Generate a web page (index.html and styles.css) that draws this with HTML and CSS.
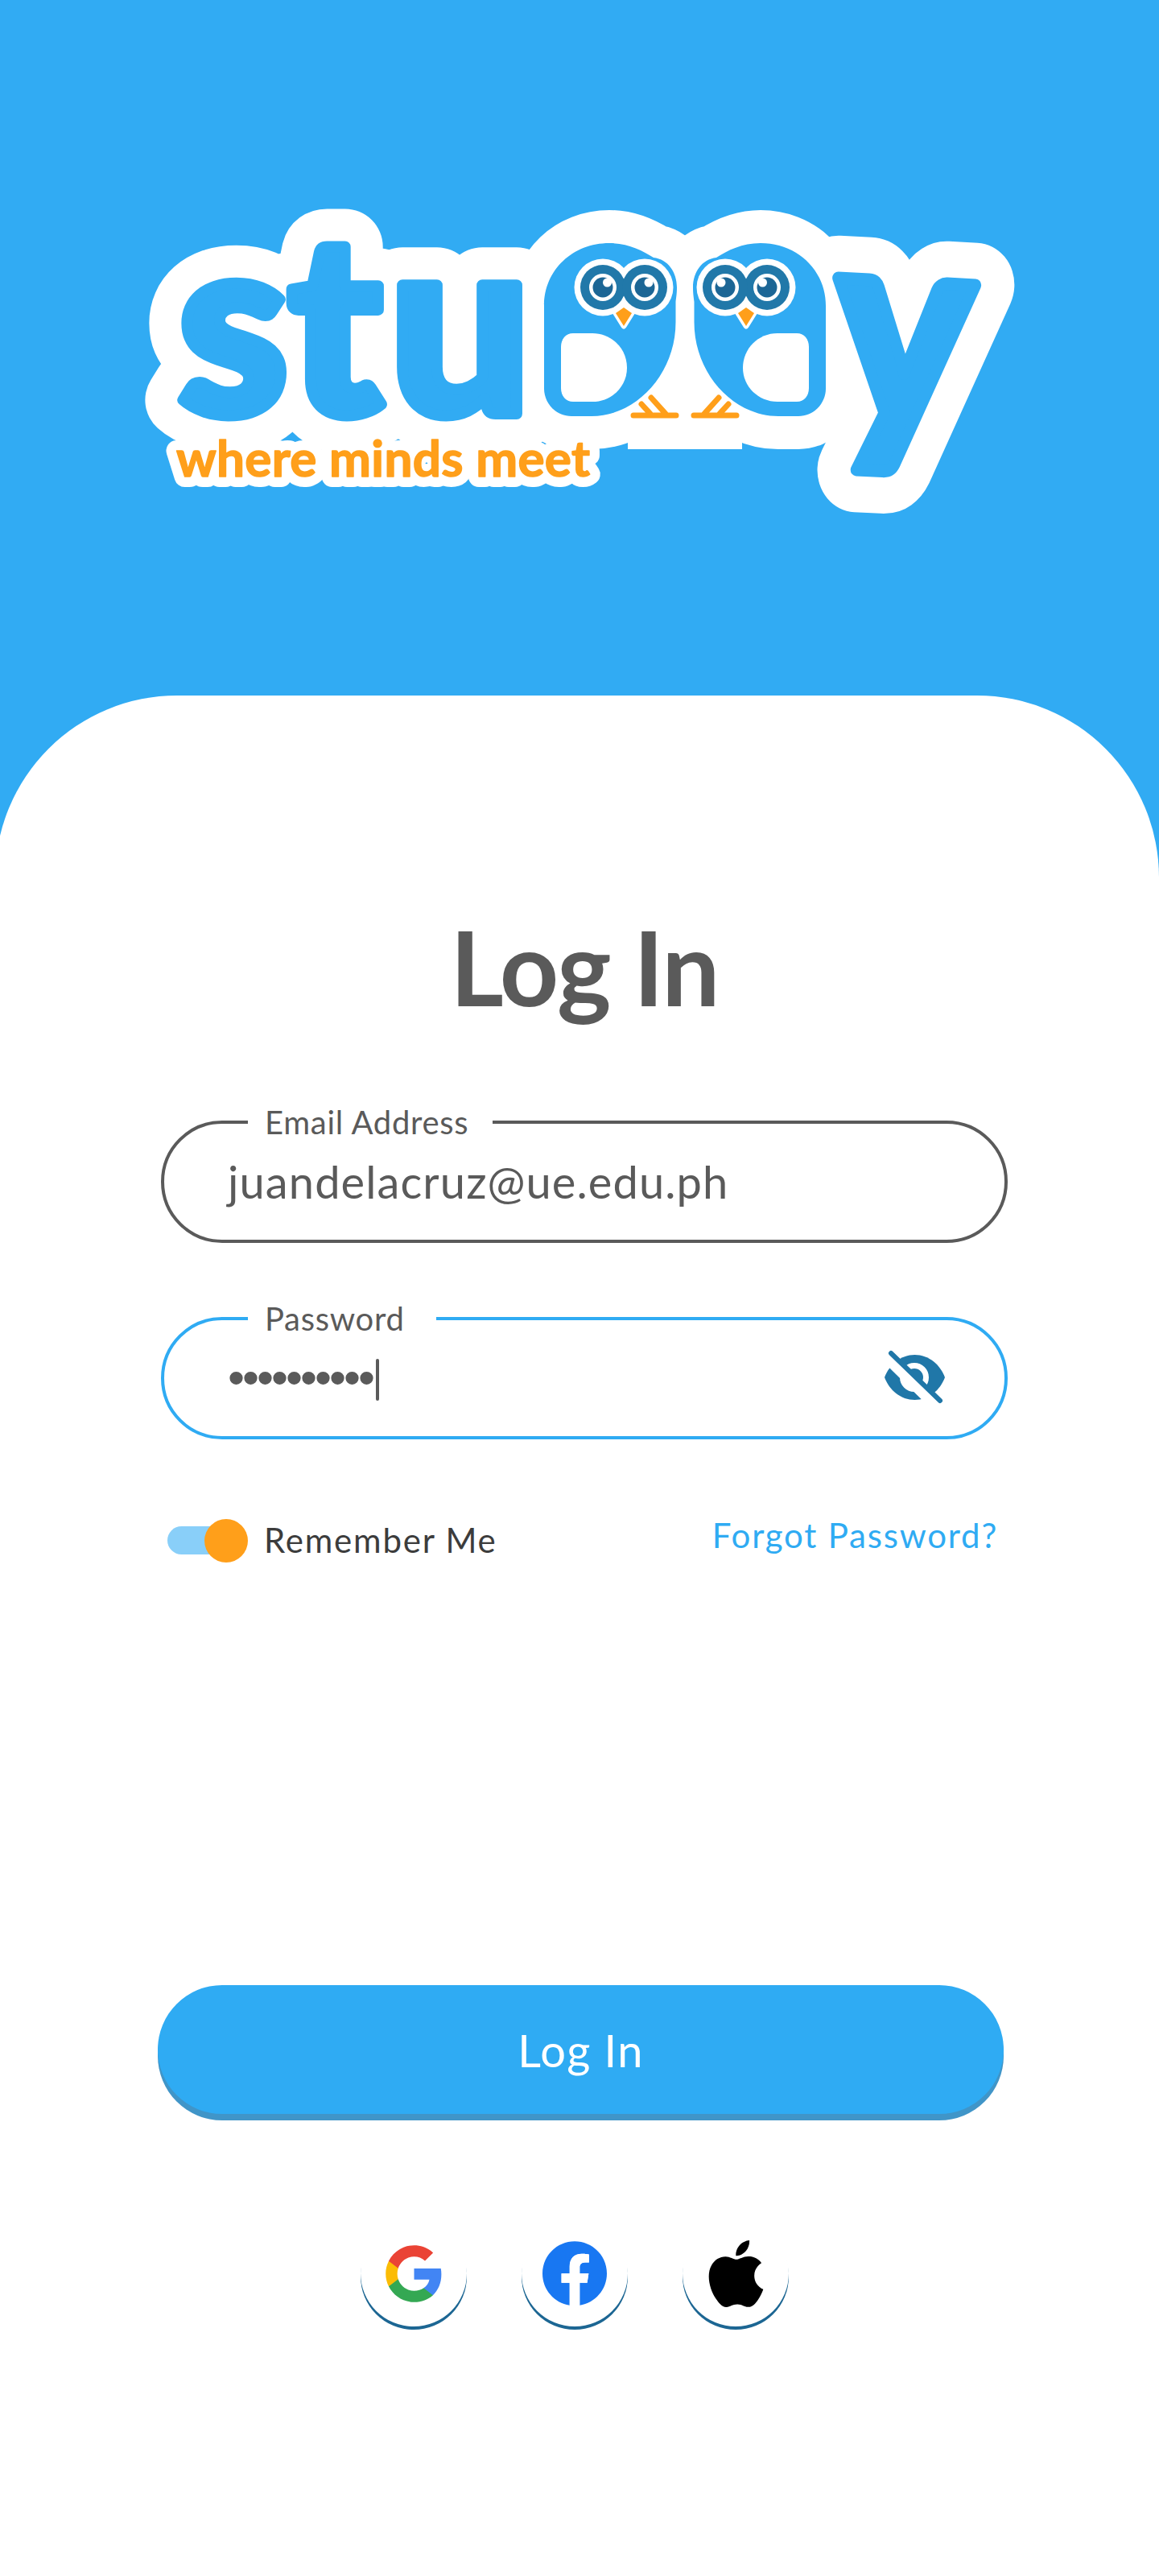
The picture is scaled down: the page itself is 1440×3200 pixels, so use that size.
FILE: index.html
```html
<!DOCTYPE html>
<html lang="en">
<head>
  <meta charset="UTF-8">
  <title>Studdy - Log In</title>
  <link rel="stylesheet" href="styles.css">
</head>
<body>
  <div class="page">
    <header class="hero">
      <svg class="logo" viewBox="0 0 1440 864" role="img" aria-label="Studdy, where minds meet">
        <defs>
          <g id="word">
            <text class="logo-letters" x="221 358 484" y="514" >stu</text>
            <text class="logo-letters" transform="translate(1032 524) rotate(3) scale(1.03 1.12)">y</text>
          </g>
          <path id="body" d="M676 380C676 335 712 302 757 302C780 302 798 311 812 320C830 322 841 338 841 357C841 365 840 370 839.500 375V400C839.500 465 790 517 735 517H710C690 517 676 500 676 483Z"/>
          <text id="tagline" class="tagline" x="219" y="592" textLength="514">where minds meet</text>
          <g id="bird">
            <path class="belly" d="M712 414H736C760 414 779 433 779 457C779 480 760 499 736 499H712C703 499 697 492 697 482V431C697 421 703 414 712 414Z"/>
            <circle class="eye-white" cx="749" cy="357" r="35.500"/>
            <circle class="eye-white" cx="801" cy="357" r="35.500"/>
            <path class="beak" d="M775 382L785 389L775 405L765 389Z"/>
            <circle class="eye-ring" cx="749" cy="357" r="28"/>
            <circle class="eye-ring" cx="801" cy="357" r="28"/>
            <circle class="eye-white" cx="749" cy="357" r="17"/>
            <circle class="eye-white" cx="801" cy="357" r="17"/>
            <circle class="pupil" cx="749" cy="357" r="12.500"/>
            <circle class="pupil" cx="801" cy="357" r="12.500"/>
            <circle class="eye-white" cx="754.500" cy="351" r="5.500"/>
            <circle class="eye-white" cx="806" cy="351" r="5.500"/>
            <path class="feet" d="M787 516H840M827 514L809 494M808 514L797 502"/>
          </g>
        </defs>

        <use href="#word" class="halo-word"/>
        <use href="#body" class="halo-body"/>
        <use href="#body" class="halo-body" transform="matrix(-1 0 0 1 1702 0)"/>
        <rect class="belly" x="780" y="470" width="142" height="88"/>

        <use href="#word" class="fill-word"/>
        <use href="#body" class="fill-body"/>
        <use href="#body" class="fill-body" transform="matrix(-1 0 0 1 1702 0)"/>
        <use href="#bird"/>
        <use href="#bird" transform="matrix(-1 0 0 1 1702 0)"/>

        <use href="#tagline" class="halo-tagline"/>
        <use href="#tagline" class="fill-tagline"/>
      </svg>
    </header>

    <main class="card">
      <div class="form">
        <h1 class="title">Log In</h1>

        <fieldset class="field">
          <legend class="field-label label-email">Email Address</legend>
          <div class="field-value email-value">juandelacruz@ue.edu.ph</div>
        </fieldset>

        <fieldset class="field field-active">
          <legend class="field-label label-password">Password</legend>
          <div class="field-value">
            <span class="dots">••••••••••</span>
            <span class="caret"></span>
            <svg class="eye-icon" viewBox="0 0 80 68">
              <path fill="#2077a8" d="M2 34C8 18 22 6 39.500 6C57 6 71 18 77 34C71 50 57 62 39.500 62C22 62 8 50 2 34Z"/>
              <circle cx="39" cy="34" r="14.500" fill="#2077a8" stroke="#fff" stroke-width="7"/>
              <path stroke="#fff" stroke-width="13" d="M0 5L68 72"/>
              <path stroke="#2077a8" stroke-width="6" stroke-linecap="round" d="M10 4L71 63"/>
            </svg>
          </div>
        </fieldset>

        <div class="options">
          <label class="remember">
            <span class="toggle"><span class="toggle-knob"></span></span>
            Remember Me
          </label>
          <a class="forgot" href="#">Forgot Password?</a>
        </div>

        <button class="login-btn" type="button">Log In</button>

        <div class="socials">
          <a class="social" href="#" aria-label="Google">
            <svg width="77" height="77" viewBox="0 0 24 24">
              <path fill="#4285F4" d="M22.560 12.250c0-.78-.07-1.530-.2-2.250H12v4.260h5.920c-.26 1.370-1.040 2.530-2.210 3.310v2.770h3.570c2.080-1.920 3.280-4.740 3.280-8.090z"/>
              <path fill="#34A853" d="M12 23c2.970 0 5.460-.98 7.280-2.660l-3.570-2.770c-.98.66-2.230 1.060-3.710 1.060-2.860 0-5.290-1.930-6.160-4.530H2.180v2.840C3.990 20.530 7.700 23 12 23z"/>
              <path fill="#FBBC05" d="M5.840 14.090c-.22-.66-.35-1.360-.35-2.090s.13-1.430.35-2.090V7.070H2.180C1.430 8.550 1 10.220 1 12s.43 3.450 1.180 4.930l2.850-2.220.81-.62z"/>
              <path fill="#EA4335" d="M12 5.380c1.620 0 3.060.56 4.210 1.640l3.150-3.150C17.450 2.090 14.970 1 12 1 7.700 1 3.990 3.470 2.180 7.070l3.660 2.840c.87-2.600 3.300-4.530 6.160-4.530z"/>
            </svg>
          </a>
          <a class="social" href="#" aria-label="Facebook">
            <svg width="80" height="80" viewBox="0 0 24 24">
              <path fill="#1877f2" d="M24 12.073c0-6.627-5.373-12-12-12s-12 5.373-12 12c0 5.990 4.388 10.954 10.125 11.854v-8.385H7.078v-3.470h3.047V9.430c0-3.007 1.792-4.669 4.533-4.669 1.312 0 2.686.235 2.686.235v2.953H15.830c-1.491 0-1.956.925-1.956 1.874v2.250h3.328l-.532 3.470h-2.796v8.385C19.612 23.027 24 18.062 24 12.073z"/>
              <path fill="#fff" d="M16.671 15.542l.532-3.470h-3.328v-2.250c0-.949.465-1.874 1.956-1.874h1.513V4.995s-1.374-.235-2.686-.235c-2.741 0-4.533 1.662-4.533 4.669v2.643H7.078v3.470h3.047v8.385a12 12 0 0 0 3.750 0v-8.385z"/>
            </svg>
          </a>
          <a class="social" href="#" aria-label="Apple">
            <svg width="83" height="83" viewBox="0 0 24 24">
              <path fill="#000" d="M12.152 6.896c-.948 0-2.415-1.078-3.960-1.040-2.040.027-3.910 1.183-4.961 3.014-2.117 3.675-.546 9.103 1.519 12.090 1.013 1.454 2.208 3.090 3.792 3.039 1.520-.065 2.090-.987 3.935-.987 1.831 0 2.350.987 3.960.948 1.637-.026 2.676-1.480 3.676-2.948 1.156-1.688 1.636-3.325 1.662-3.415-.039-.013-3.182-1.221-3.220-4.857-.026-3.040 2.480-4.494 2.597-4.559-1.429-2.090-3.623-2.324-4.390-2.376-2-.156-3.675 1.090-4.610 1.090zM15.530 3.830c.843-1.012 1.400-2.427 1.245-3.830-1.207.052-2.662.805-3.532 1.818-.78.896-1.454 2.338-1.273 3.714 1.338.104 2.715-.688 3.559-1.701"/>
            </svg>
          </a>
        </div>
      </div>
    </main>
  </div>
</body>
</html>
```

FILE: styles.css
```css
* {
  box-sizing: border-box;
}

body {
  margin: 0;
  font-family: Lato, "Open Sans", sans-serif;
  color: #5a5a5a;
  overflow-x: hidden;
}

.page {
  background-color: #31abf3;
  height: 3200px;
  overflow: hidden;
}

/* logo */

.hero {
  height: 864px;
}

.logo {
  display: block;
  width: 1440px;
  height: 864px;
}

.logo-letters {
  font-family: Lato, sans-serif;
  font-weight: 900;
  font-size: 310px;
}

.halo-word {
  fill: #fff;
  stroke: #fff;
  stroke-width: 94px;
  stroke-linejoin: round;
}

.fill-word {
  fill: #31abf3;
  stroke: #31abf3;
  stroke-width: 14px;
  stroke-linejoin: round;
}

.halo-body {
  fill: #fff;
  stroke: #fff;
  stroke-width: 82px;
  stroke-linejoin: round;
}

.fill-body {
  fill: #31abf3;
}

.belly,
.eye-white {
  fill: #fff;
}

.eye-ring {
  fill: #2178a9;
}

.pupil {
  fill: #1c6695;
}

.beak {
  fill: #ff9f1a;
  stroke: #fff;
  stroke-width: 7px;
  stroke-linejoin: round;
  paint-order: stroke;
}

.feet {
  fill: none;
  stroke: #ff9f1a;
  stroke-width: 7px;
  stroke-linecap: round;
}

.tagline {
  font-family: Lato, sans-serif;
  font-weight: 700;
  font-size: 62px;
}

.halo-tagline {
  fill: #fff;
  stroke: #fff;
  stroke-width: 26px;
  stroke-linejoin: round;
}

.fill-tagline {
  fill: #ff9f1a;
  stroke: #ff9f1a;
  stroke-width: 1.500px;
  stroke-linejoin: round;
}

/* card */

.card {
  margin-left: -6px;
  height: 2336px;
  background-color: #fff;
  border-radius: 226px 226px 0 0;
}

.form {
  width: 1052px;
  margin-left: 206px;
  padding-top: 267px;
}

.title {
  margin: 0 0 99px;
  font-size: 128px;
  line-height: 140px;
  font-weight: 700;
  letter-spacing: -1.800px;
  text-align: center;
}

/* inputs, the legend cuts the gap in the border */

.field {
  margin: 0 0 70px;
  padding: 0;
  min-width: 0;
  height: 174px;
  border: 4px solid #5a5a5a;
  border-radius: 78px;
}

.field-active {
  border-color: #2fabf3;
}

.field-label {
  margin-left: 104px;
  padding: 0 30px 0 21px;
  height: 48px;
  font-size: 40px;
  line-height: 48px;
  letter-spacing: .7px;
  color: #5a5a5a;
}

.label-password {
  padding-right: 39px;
}

.field-value {
  display: flex;
  align-items: center;
  height: 98px;
  padding: 0 71px 0 79px;
  font-size: 56px;
}

.email-value {
  letter-spacing: 1.100px;
}

.dots {
  font-family: "Liberation Sans", sans-serif;
  font-size: 60px;
  letter-spacing: -3px;
}

.caret {
  width: 4px;
  height: 52px;
  margin: 6px 0 0 4px;
  border-radius: 2px;
  background-color: #5a5a5a;
}

.eye-icon {
  width: 80px;
  height: 68px;
  margin-left: auto;
}

/* remember me row */

.options {
  display: flex;
  justify-content: space-between;
  align-items: flex-start;
  margin-top: 94px;
  padding: 0 12px 0 8px;
}

.remember {
  display: flex;
  align-items: center;
  margin-top: 6px;
  font-size: 42px;
  letter-spacing: 1.800px;
  color: #3c3c3c;
}

.toggle {
  position: relative;
  width: 82px;
  height: 35px;
  margin-right: 38px;
  border-radius: 18px;
  background-color: #89cff9;
}

.toggle-knob {
  position: absolute;
  top: -9px;
  right: -18px;
  width: 54px;
  height: 54px;
  border-radius: 50%;
  background-color: #ff9f1a;
}

.forgot {
  font-size: 42px;
  letter-spacing: 1.800px;
  color: #2fabf3;
  text-decoration: none;
}

/* buttons */

.login-btn {
  display: block;
  width: 1051px;
  height: 160px;
  margin: 528px 0 0 -4px;
  border: 0;
  border-radius: 80px;
  background-color: #2fabf3;
  box-shadow: 0 8px 0 #4095c8;
  color: #fff;
  font-family: inherit;
  font-size: 56px;
  letter-spacing: 1.400px;
}

.socials {
  display: flex;
  gap: 68px;
  margin: 132px 0 0 248px;
}

.social {
  display: flex;
  justify-content: center;
  align-items: center;
  width: 132px;
  height: 132px;
  border-radius: 50%;
  background-color: #fff;
  box-shadow: 0 4px 0 #1c6693;
}
```
